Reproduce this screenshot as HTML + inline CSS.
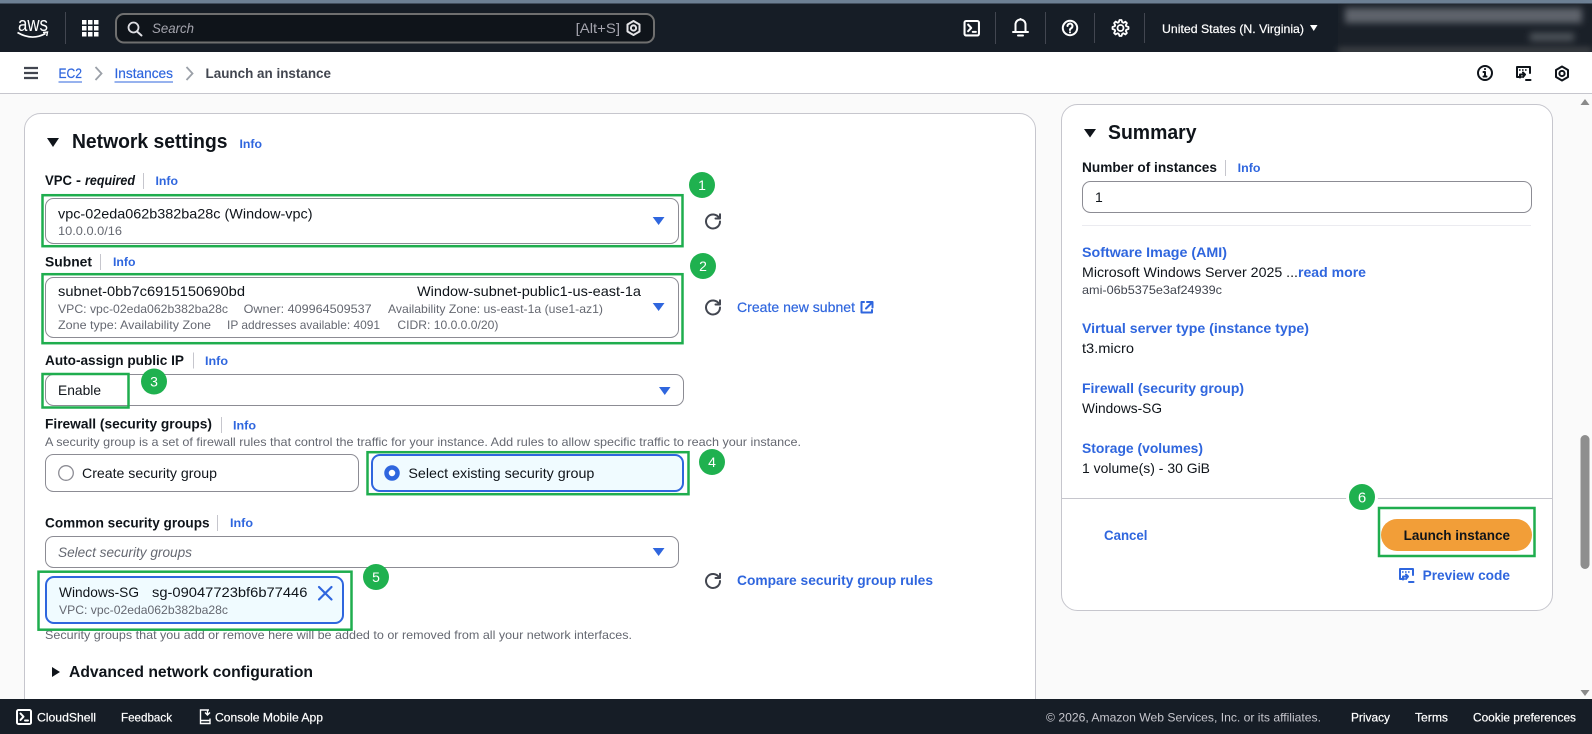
<!DOCTYPE html>
<html lang="en"><head><meta charset="utf-8"><title>Launch an instance</title>
<style>
html,body{margin:0;padding:0;width:1592px;height:734px;overflow:hidden;background:#fafafa}
svg{display:block}
text{font-family:"Liberation Sans",sans-serif;font-size:14px;fill:#0f141a}
.b{font-weight:700}
.s{font-size:12px;fill:#656871}
.l{font-weight:700;fill:#2f66de}
.i{font-size:12px;font-weight:700;fill:#2f66de}
.w{fill:#fff;font-size:12px;stroke:#fff;stroke-width:.2}
.c{fill:#c6c6cd;font-size:12px}
.n{fill:#fff;font-size:14px;text-anchor:middle}
.bx{fill:#fff;stroke:#8c8c94;stroke-width:1}
.g{fill:none;stroke:#1fad4e;stroke-width:2.5}
.gc{fill:#1fb14f}
.sep{stroke:#c6c6cd;stroke-width:1}
.ic{fill:none;stroke-width:2;stroke-linecap:round;stroke-linejoin:round}
.car{fill:#2f66de}
</style></head>
<body>
<svg width="1592" height="734" viewBox="0 0 1592 734" xmlns="http://www.w3.org/2000/svg">
<defs>
<filter id="bl" x="-10%" y="-80%" width="120%" height="260%"><feGaussianBlur stdDeviation="3.5"/></filter>
<g id="refresh"><path class="ic" stroke="#424650" d="M10.500 5h4.500V.8M15 8a7 7 0 1 1-.82-3.3" transform="translate(0 0.500)"/></g>
<g id="hex"><path class="ic" d="M8 1l6 3.500v7L8 15l-6-3.500v-7z"/><circle cx="8" cy="8" r="2.600" fill="none" stroke-width="2" stroke="currentColor"/></g>
<g id="term"><rect x="1" y="1" width="14" height="14" rx="1.500" class="ic"/><path class="ic" d="M4.500 4.500l3 3.200-3 3.200M9 11.500h3"/></g>
<g id="prev"><path class="ic" d="M6 12H2V2h13v6"/><path d="M4 4.200h1.600v1.600H4zM7 4.200h1.600v1.600H7zM10 4.200h1.600v1.600H10z" fill="currentColor" stroke="none"/><path class="ic" d="M5 9.500h4.500M8 7.500l2 2-2 2.500M5 9.500v3"/><path class="ic" d="M11 15h4.500"/></g>
</defs>

<rect width="1592" height="734" fill="#fafafa"/>

<!-- network panel -->
<rect x="24.500" y="113.500" width="1011" height="640" rx="16" fill="#fff" stroke="#c6c6cd"/>

<path d="M47 138h12l-6 9z" fill="#0f141a"/>
<text x="72" y="148" class="b" style="font-size:20px" textLength="155.500" lengthAdjust="spacingAndGlyphs">Network settings</text>
<text x="239.500" y="148" class="i" textLength="22.500" lengthAdjust="spacingAndGlyphs">Info</text>

<text x="45" y="185" class="b" textLength="27" lengthAdjust="spacingAndGlyphs">VPC</text>
<text x="76" y="185" class="b" textLength="5" lengthAdjust="spacingAndGlyphs">-</text>
<text x="85" y="185" class="b" style="font-style:italic" textLength="50" lengthAdjust="spacingAndGlyphs">required</text>
<line x1="143.500" y1="173" x2="143.500" y2="189" class="sep"/>
<text x="155.500" y="185" class="i" textLength="22.500" lengthAdjust="spacingAndGlyphs">Info</text>

<rect x="45.500" y="198.500" width="633" height="45" rx="8" class="bx"/>
<text x="58" y="218.500" textLength="254.500" lengthAdjust="spacingAndGlyphs">vpc-02eda062b382ba28c (Window-vpc)</text>
<text x="58" y="235" class="s" textLength="64" lengthAdjust="spacingAndGlyphs">10.0.0.0/16</text>
<path class="car" d="M652.700 217h11.800l-5.900 8z"/>
<use href="#refresh" transform="translate(705 213)"/>

<text x="45" y="266.500" class="b" textLength="47" lengthAdjust="spacingAndGlyphs">Subnet</text>
<line x1="100.500" y1="254" x2="100.500" y2="270" class="sep"/>
<text x="113" y="266" class="i" textLength="22.500" lengthAdjust="spacingAndGlyphs">Info</text>

<rect x="45.500" y="277.500" width="633" height="60" rx="8" class="bx"/>
<text x="58" y="296" textLength="187" lengthAdjust="spacingAndGlyphs">subnet-0bb7c6915150690bd</text>
<text x="417" y="296" textLength="224" lengthAdjust="spacingAndGlyphs">Window-subnet-public1-us-east-1a</text>
<text x="58" y="313" class="s" textLength="170" lengthAdjust="spacingAndGlyphs">VPC: vpc-02eda062b382ba28c</text>
<text x="243.600" y="313" class="s" textLength="128" lengthAdjust="spacingAndGlyphs">Owner: 409964509537</text>
<text x="388" y="313" class="s" textLength="215" lengthAdjust="spacingAndGlyphs">Availability Zone: us-east-1a (use1-az1)</text>
<text x="58" y="329" class="s" textLength="153" lengthAdjust="spacingAndGlyphs">Zone type: Availability Zone</text>
<text x="227" y="329" class="s" textLength="153" lengthAdjust="spacingAndGlyphs">IP addresses available: 4091</text>
<text x="397.400" y="329" class="s" textLength="101" lengthAdjust="spacingAndGlyphs">CIDR: 10.0.0.0/20)</text>
<path class="car" d="M652.700 303h11.800l-5.900 8z"/>
<use href="#refresh" transform="translate(705 299)"/>
<text x="737" y="312" style="fill:#2f66de;stroke:#2f66de;stroke-width:.2" textLength="118" lengthAdjust="spacingAndGlyphs">Create new subnet</text>
<path class="ic" stroke="#2f66de" d="M867 302h5.500v5.500M872 302.500l-6 6M864 302h-2.500v10.500H872V310"/>

<text x="45" y="365" class="b" textLength="139" lengthAdjust="spacingAndGlyphs">Auto-assign public IP</text>
<line x1="193.500" y1="352.500" x2="193.500" y2="368.500" class="sep"/>
<text x="205" y="365" class="i" textLength="23" lengthAdjust="spacingAndGlyphs">Info</text>

<rect x="45.500" y="374.500" width="638" height="31" rx="8" class="bx"/>
<text x="58" y="395" textLength="43" lengthAdjust="spacingAndGlyphs">Enable</text>
<path class="car" d="M659 387h11.500l-5.750 8z"/>

<text x="45" y="428.500" class="b" textLength="167" lengthAdjust="spacingAndGlyphs">Firewall (security groups)</text>
<line x1="221.500" y1="417" x2="221.500" y2="433" class="sep"/>
<text x="233" y="429.500" class="i" textLength="23" lengthAdjust="spacingAndGlyphs">Info</text>
<text x="45" y="446" class="s" textLength="756" lengthAdjust="spacingAndGlyphs">A security group is a set of firewall rules that control the traffic for your instance. Add rules to allow specific traffic to reach your instance.</text>

<rect x="45.500" y="454.500" width="313" height="37" rx="8" class="bx"/>
<circle cx="66" cy="473" r="7.300" fill="#fff" stroke="#8c8c94" stroke-width="1.300"/>
<text x="82" y="478" textLength="135" lengthAdjust="spacingAndGlyphs">Create security group</text>

<rect x="372" y="455" width="311" height="36" rx="8" fill="#f0fbff" stroke="#2f66de" stroke-width="2"/>
<circle cx="392" cy="473" r="5.500" fill="#fff" stroke="#2f66de" stroke-width="4.500"/>
<text x="408.400" y="478" textLength="186" lengthAdjust="spacingAndGlyphs">Select existing security group</text>

<text x="45" y="527.500" class="b" textLength="164.600" lengthAdjust="spacingAndGlyphs">Common security groups</text>
<line x1="217.500" y1="515" x2="217.500" y2="531" class="sep"/>
<text x="230" y="527" class="i" textLength="23" lengthAdjust="spacingAndGlyphs">Info</text>

<rect x="45.500" y="536.500" width="633" height="31" rx="8" class="bx"/>
<text x="58" y="557" style="font-style:italic;fill:#656871" textLength="134" lengthAdjust="spacingAndGlyphs">Select security groups</text>
<path class="car" d="M652.700 548h11.800l-5.900 8z"/>

<rect x="46" y="577" width="297" height="46" rx="8" fill="#f0fbff" stroke="#2f66de" stroke-width="2"/>
<text x="59" y="597" textLength="80" lengthAdjust="spacingAndGlyphs">Windows-SG</text>
<text x="152" y="597" textLength="155.400" lengthAdjust="spacingAndGlyphs">sg-09047723bf6b77446</text>
<path d="M319 587l12.500 12.500M331.500 587L319 599.500" fill="none" stroke="#2f66de" stroke-width="2.200" stroke-linecap="round"/>
<text x="59" y="614" class="s" textLength="169" lengthAdjust="spacingAndGlyphs">VPC: vpc-02eda062b382ba28c</text>
<text x="45" y="639" class="s" textLength="587" lengthAdjust="spacingAndGlyphs">Security groups that you add or remove here will be added to or removed from all your network interfaces.</text>
<use href="#refresh" transform="translate(705 572.500)"/>
<text x="737" y="585" class="l" textLength="196" lengthAdjust="spacingAndGlyphs">Compare security group rules</text>

<path d="M52 667l8 5-8 5z" fill="#0f141a"/>
<text x="69" y="677" class="b" style="font-size:16px" textLength="244" lengthAdjust="spacingAndGlyphs">Advanced network configuration</text>

<!-- green annotations -->
<rect x="42.500" y="195.200" width="640" height="51" class="g"/>
<rect x="42.500" y="274.200" width="640" height="69" class="g"/>
<rect x="42.500" y="374" width="86" height="33.500" class="g"/>
<rect x="367.500" y="452.200" width="321" height="42" class="g"/>
<rect x="38.500" y="571.700" width="313" height="58" class="g"/>
<circle cx="702" cy="185" r="13" class="gc"/><text x="702" y="190" class="n">1</text>
<circle cx="703" cy="266" r="13" class="gc"/><text x="703" y="271" class="n">2</text>
<circle cx="154" cy="381.500" r="13" class="gc"/><text x="154" y="386.500" class="n">3</text>
<circle cx="712" cy="462" r="13" class="gc"/><text x="712" y="467" class="n">4</text>
<circle cx="376" cy="577" r="13" class="gc"/><text x="376" y="582" class="n">5</text>

<!-- summary panel -->
<rect x="1061.500" y="104.500" width="491" height="506" rx="16" fill="#fff" stroke="#c6c6cd"/>
<path d="M1084 129h12l-6 8.500z" fill="#0f141a"/>
<text x="1108" y="139" class="b" style="font-size:20px" textLength="88.500" lengthAdjust="spacingAndGlyphs">Summary</text>
<text x="1082" y="172" class="b" textLength="135" lengthAdjust="spacingAndGlyphs">Number of instances</text>
<line x1="1225.500" y1="160" x2="1225.500" y2="176" class="sep"/>
<text x="1237.700" y="172" class="i" textLength="22.800" lengthAdjust="spacingAndGlyphs">Info</text>
<rect x="1082.500" y="181.500" width="449" height="31" rx="8" class="bx"/>
<text x="1095" y="202">1</text>
<line x1="1082" y1="225.500" x2="1531" y2="225.500" stroke="#ebebf0"/>

<text x="1082" y="257" class="l" textLength="145" lengthAdjust="spacingAndGlyphs">Software Image (AMI)</text>
<text x="1082" y="277" textLength="216" lengthAdjust="spacingAndGlyphs">Microsoft Windows Server 2025 ...</text>
<text x="1298" y="277" class="l" textLength="68" lengthAdjust="spacingAndGlyphs">read more</text>
<text x="1082" y="294" class="s" style="fill:#424650" textLength="140" lengthAdjust="spacingAndGlyphs">ami-06b5375e3af24939c</text>
<text x="1082" y="333" class="l" textLength="227" lengthAdjust="spacingAndGlyphs">Virtual server type (instance type)</text>
<text x="1082" y="353" textLength="52" lengthAdjust="spacingAndGlyphs">t3.micro</text>
<text x="1082" y="393" class="l" textLength="162" lengthAdjust="spacingAndGlyphs">Firewall (security group)</text>
<text x="1082" y="413" textLength="80" lengthAdjust="spacingAndGlyphs">Windows-SG</text>
<text x="1082" y="453" class="l" textLength="121" lengthAdjust="spacingAndGlyphs">Storage (volumes)</text>
<text x="1082" y="473" textLength="128" lengthAdjust="spacingAndGlyphs">1 volume(s) - 30 GiB</text>
<line x1="1062" y1="498.500" x2="1552" y2="498.500" stroke="#c6c6cd"/>
<circle cx="1362" cy="497" r="14.500" fill="#1fb14f" stroke="#fff" stroke-width="3"/>
<text x="1362" y="502.500" class="n" style="font-size:15px">6</text>
<text x="1104" y="540" class="l" textLength="43.500" lengthAdjust="spacingAndGlyphs">Cancel</text>
<rect x="1381" y="519" width="151" height="32" rx="16" fill="#f29e38"/>
<text x="1403.600" y="540" class="b" textLength="106.400" lengthAdjust="spacingAndGlyphs">Launch instance</text>
<rect x="1379" y="508" width="155.500" height="48" class="g"/>
<g color="#2f66de" stroke="#2f66de"><use href="#prev" transform="translate(1398 567)"/></g>
<text x="1422.600" y="580" class="l" textLength="87.400" lengthAdjust="spacingAndGlyphs">Preview code</text>

<!-- scrollbar -->
<path d="M1585 99l4.500 6h-9z" fill="#8a8a8a"/>
<rect x="1580.500" y="435" width="9" height="134" rx="4.500" fill="#8e8e8e"/>
<path d="M1585 696l4.500-6h-9z" fill="#8a8a8a"/>

<!-- top header -->
<rect width="1592" height="52" fill="#161d26"/>
<rect width="1592" height="3.500" fill="#6d8094"/>
<text x="18" y="31" style="font-size:20px;fill:#fff" textLength="30" lengthAdjust="spacingAndGlyphs">aws</text>
<path d="M17.500 32.500Q32 41 45.500 33.500" fill="none" stroke="#fff" stroke-width="1.600"/>
<path d="M43 32.500l4.500-.5-.8 4" fill="none" stroke="#fff" stroke-width="1.400"/>
<line x1="65.500" y1="12" x2="65.500" y2="44" stroke="#424650"/>
<g fill="#fff">
<rect x="82" y="20" width="4.500" height="4.500"/><rect x="88" y="20" width="4.500" height="4.500"/><rect x="94" y="20" width="4.500" height="4.500"/>
<rect x="82" y="26" width="4.500" height="4.500"/><rect x="88" y="26" width="4.500" height="4.500"/><rect x="94" y="26" width="4.500" height="4.500"/>
<rect x="82" y="32" width="4.500" height="4.500"/><rect x="88" y="32" width="4.500" height="4.500"/><rect x="94" y="32" width="4.500" height="4.500"/>
</g>
<rect x="116" y="14" width="538" height="28.500" rx="8" fill="#0f141a" stroke="#6f6f6f" stroke-width="2"/>
<circle cx="133.500" cy="27.500" r="5" fill="none" stroke="#dedee3" stroke-width="1.800"/>
<line x1="137" y1="31.500" x2="141.500" y2="35.500" stroke="#dedee3" stroke-width="2" stroke-linecap="round"/>
<text x="152" y="33" style="font-style:italic;fill:#a4a4ad" textLength="42" lengthAdjust="spacingAndGlyphs">Search</text>
<text x="575.600" y="33" style="fill:#a4a4ad" textLength="44.400" lengthAdjust="spacingAndGlyphs">[Alt+S]</text>
<g color="#e5e5e8" stroke="#e5e5e8"><use href="#hex" transform="translate(625.500 20)"/></g>

<g color="#fff" stroke="#fff"><use href="#term" transform="translate(963.500 20) scale(1.030)"/></g>
<line x1="995.500" y1="12" x2="995.500" y2="44" stroke="#424650"/>
<g stroke="#fff"><path class="ic" d="M1013 32h15M1015.500 32V24.500a5 5 0 0 1 10 0V32M1020.500 19v.5M1018 35.500h5"/></g>
<line x1="1045.500" y1="12" x2="1045.500" y2="44" stroke="#424650"/>
<g stroke="#fff"><circle cx="1070" cy="28" r="7.200" class="ic"/><path class="ic" d="M1067.500 26a2.500 2.500 0 1 1 3.600 2.300c-.8.400-1.100 1-1.100 1.700M1070 32.300v.1"/></g>
<line x1="1094.500" y1="13" x2="1094.500" y2="43" stroke="#424650"/>
<path transform="translate(1112.500 20)" class="ic" stroke="#fff" style="stroke-width:1.800" d="M13.300 5.200l1.100-2.100L13 1.700l-2.100 1.100c-.3-.2-.7-.3-1.100-.4L9 0H7l-.8 2.300c-.3.100-.7.200-1 .4L3.100 1.600 1.600 3.100l1.100 2.100c-.2.300-.3.700-.4 1L0 7v2l2.300.8c.1.400.3.700.4 1.100L1.600 13 3 14.400l2.100-1.100c.3.200.7.300 1.100.4L7 16h2l.8-2.300c.4-.1.700-.3 1.100-.4l2.100 1.100 1.400-1.400-1.100-2.100c.2-.3.300-.7.400-1.100L16 9V7l-2.300-.8c-.1-.3-.2-.7-.4-1zM8 11c-1.700 0-3-1.300-3-3s1.300-3 3-3 3 1.300 3 3-1.300 3-3 3z"/>
<line x1="1144.500" y1="13" x2="1144.500" y2="43" stroke="#424650"/>
<text x="1162" y="33" class="w" textLength="142" lengthAdjust="spacingAndGlyphs">United States (N. Virginia)</text>
<path d="M1310 25h7.500l-3.750 6z" fill="#fff"/>

<!-- blurred account -->
<rect x="1338" y="4" width="254" height="48" fill="#1a2028"/>
<g filter="url(#bl)">
<rect x="1345" y="8" width="237" height="15" fill="#5f646c"/>
<rect x="1530" y="33" width="44" height="8" fill="#50545c"/>
<rect x="1338" y="49" width="254" height="3" fill="#666"/>
</g>

<!-- nav bar -->
<rect y="52" width="1592" height="41" fill="#fff"/>
<rect y="93" width="1592" height="1" fill="#c6c6cd"/>
<path d="M24 68h14M24 73h14M24 78h14" stroke="#424650" stroke-width="2.200"/>
<text x="58.500" y="78" style="fill:#2f66de;stroke:#2f66de;stroke-width:.2" textLength="23.500" lengthAdjust="spacingAndGlyphs">EC2</text>
<line x1="58.500" y1="82" x2="82" y2="82" stroke="#2f66de"/>
<path d="M95.500 67l6 6.500-6 6.500" fill="none" stroke="#9ba0a8" stroke-width="1.800"/>
<text x="114.500" y="78" style="fill:#2f66de;stroke:#2f66de;stroke-width:.2" textLength="58.500" lengthAdjust="spacingAndGlyphs">Instances</text>
<line x1="114.500" y1="82" x2="173" y2="82" stroke="#2f66de"/>
<path d="M186.500 67l6 6.500-6 6.500" fill="none" stroke="#9ba0a8" stroke-width="1.800"/>
<text x="205.500" y="78" class="b" style="fill:#424650" textLength="125.500" lengthAdjust="spacingAndGlyphs">Launch an instance</text>
<g stroke="#0f141a"><circle cx="1485" cy="73" r="7" class="ic"/><path class="ic" d="M1485 72v4.500M1483.500 76.500h3M1483.500 72h1.500M1485 69v.1"/></g>
<g color="#0f141a" stroke="#0f141a"><use href="#prev" transform="translate(1515 65)"/></g>
<g color="#0f141a" stroke="#0f141a"><use href="#hex" transform="translate(1554 65.500)"/></g>

<!-- footer -->
<rect y="699" width="1592" height="35" fill="#161d26"/>
<g color="#fff" stroke="#fff"><use href="#term" transform="translate(16 709)"/></g>
<text x="37" y="721.500" class="w" textLength="59" lengthAdjust="spacingAndGlyphs">CloudShell</text>
<text x="121" y="721.500" class="w" textLength="51" lengthAdjust="spacingAndGlyphs">Feedback</text>
<path d="M209 710h-8.500v13.500h9.500v-5M201 720.500h9" fill="none" stroke="#fff" stroke-width="1.400"/>
<path d="M207.500 709.500v5.500M205 712.500l2.500 2.500 2.500-2.500" fill="none" stroke="#fff" stroke-width="1.400"/>
<text x="215" y="721.500" class="w" textLength="108" lengthAdjust="spacingAndGlyphs">Console Mobile App</text>
<text x="1046" y="721.500" class="c" textLength="275" lengthAdjust="spacingAndGlyphs">© 2026, Amazon Web Services, Inc. or its affiliates.</text>
<text x="1351" y="721.500" class="w" textLength="39" lengthAdjust="spacingAndGlyphs">Privacy</text>
<text x="1415" y="721.500" class="w" textLength="33" lengthAdjust="spacingAndGlyphs">Terms</text>
<text x="1473" y="721.500" class="w" textLength="103" lengthAdjust="spacingAndGlyphs">Cookie preferences</text>
</svg>
</body></html>
